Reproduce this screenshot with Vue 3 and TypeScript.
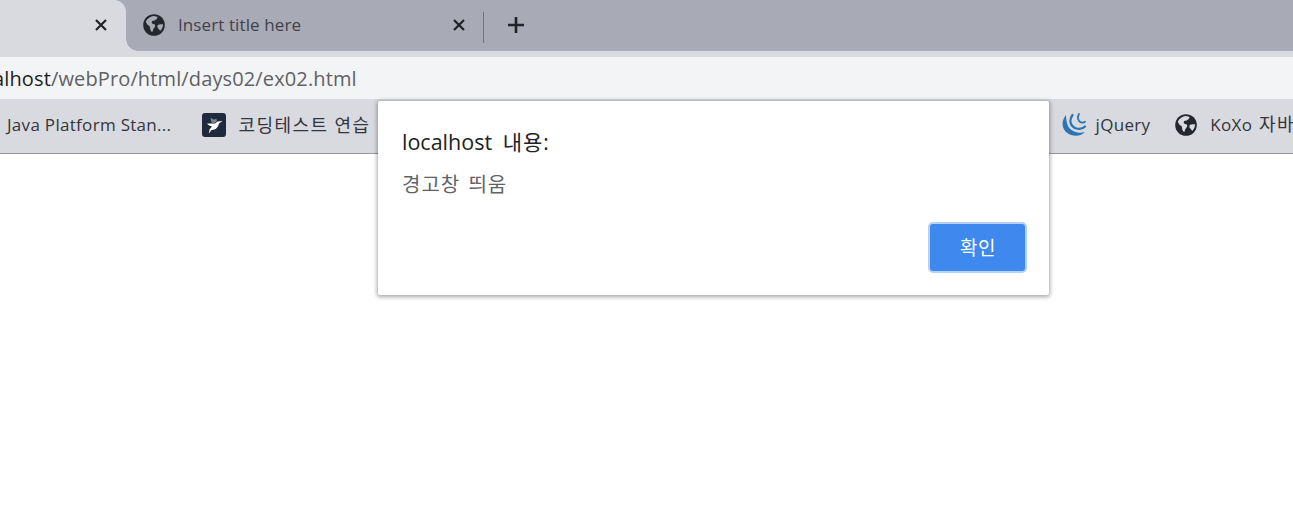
<script setup lang="ts">
const globe = "M10 1a9 9 0 1 0 0 18a9 9 0 0 0 0-18Z";
</script>

<template>
  <div class="page">
    <div class="tabstrip">
      <div class="tab active">
        <svg class="close" width="14" height="14" viewBox="0 0 14 14"><path d="M2 2L12 12M12 2L2 12" /></svg>
      </div>
      <div class="tab inactive">
        <svg class="globe" width="24" height="24" viewBox="0 0 20 20">
          <path :d="globe" fill="#24272e" />
          <path d="M3.200 7C4.600 4.400 7 2.800 9.800 2.500L12.800 3.200C13 4.600 12 5.800 10.400 6.200L8.600 6.600C7.800 7.400 8 8.800 9.200 9.200L10.800 9.600C11.400 11 10.600 12.200 9.600 13.200L8.600 15.800C7.400 15.600 7 14.400 6.800 13L6.400 11C5 10.400 3.800 9 3.200 7Z" fill="#a8abb5" />
          <path d="M13.400 9.800C14.600 9.200 16.200 9.200 17.500 9.400C17.600 11.400 16.800 13.400 15.400 14.800C14.400 14.400 14 13.400 13.200 12.600C12.600 11.600 12.800 10.400 13.400 9.800Z" fill="#a8abb5" />
        </svg>
        <span class="tab-title">Insert title here</span>
        <svg class="close" width="14" height="14" viewBox="0 0 14 14"><path d="M2 2L12 12M12 2L2 12" /></svg>
      </div>
      <div class="sep"></div>
      <svg class="plus" width="18" height="18" viewBox="0 0 18 18"><path d="M9 1V17M1 9H17" /></svg>
    </div>

    <div class="toolbar">
      <div class="omnibox"><span class="host">localhost</span><span class="path">/webPro/html/days02/ex02.html</span></div>
    </div>

    <div class="bookmarks">
      <span class="bm first">Java Platform Stan...</span>
      <span class="bm second">
        <svg width="24" height="24" viewBox="0 0 24 24">
          <rect width="24" height="24" rx="3" fill="#1f2a3f" />
          <path d="M5 10.500L13 10.500L15.500 8.500L20.500 8L17 10.500C16.500 13 15 15.500 12.500 16.500L9.500 17L7 20.500L7.500 16.500L10 13.500C8 13 6 12 5 10.500Z" fill="#fff" />
          <path d="M8.500 4.500L11.500 6.500L14.500 6L15 8L12.500 10L9.500 9.500Z" fill="#7d8694" />
        </svg>
        <span class="ko">코딩테스트 연습</span>
      </span>
      <span class="spacer"></span>
      <span class="bm third">
        <svg width="26" height="26" viewBox="0 0 26 26" fill="none" stroke="#2a76b4" stroke-linecap="round">
          <path d="M6 3C0 10 2 20 11 23C17 25 22 23 25 20C19 22 11 20 8 14C6.500 10 6 6 6 3Z" fill="#2a76b4" stroke="none" />
          <path d="M12.500 3C8.500 8.500 10.500 14.500 16.500 16.500C19.500 17.300 23 16.500 25 14.500" stroke-width="2.200" />
          <path d="M19 2C17 5.500 18 9 21 10.300C22.500 10.800 24 10.500 25 9.800" stroke-width="1.800" />
        </svg>
        <span>jQuery</span>
      </span>
      <span class="bm fourth">
        <svg width="24" height="24" viewBox="0 0 20 20">
          <path :d="globe" fill="#24272e" />
          <path d="M3.200 7C4.600 4.400 7 2.800 9.800 2.500L12.800 3.200C13 4.600 12 5.800 10.400 6.200L8.600 6.600C7.800 7.400 8 8.800 9.200 9.200L10.800 9.600C11.400 11 10.600 12.200 9.600 13.200L8.600 15.800C7.400 15.600 7 14.400 6.800 13L6.400 11C5 10.400 3.800 9 3.200 7Z" fill="#d9dadf" />
          <path d="M13.400 9.800C14.600 9.200 16.200 9.200 17.500 9.400C17.600 11.400 16.800 13.400 15.400 14.800C14.400 14.400 14 13.400 13.200 12.600C12.600 11.600 12.800 10.400 13.400 9.800Z" fill="#d9dadf" />
        </svg>
        <span>KoXo <span class="ko ko-tail">자바</span></span>
      </span>
    </div>

    <div class="dialog">
      <div class="dialog-title">localhost <span class="title-ko">내용:</span></div>
      <div class="dialog-msg">경고창 띄움</div>
      <div class="dialog-actions"><button class="ok">확인</button></div>
    </div>
  </div>
</template>

<style>
html, body { margin: 0; background: #fff; overflow: hidden; }
</style>

<style scoped>
.page {
  position: relative;
  width: 1293px;
  height: 529px;
  overflow: hidden;
  background: #fff;
  font-family: "Open Sans", "Noto Sans CJK KR", sans-serif;
}
.tabstrip {
  display: flex;
  align-items: center;
  height: 51px;
  background: #a8abb5;
}
.tab {
  display: flex;
  align-items: center;
  height: 51px;
  box-sizing: border-box;
  padding-bottom: 2px;
}
.active {
  width: 126px;
  justify-content: flex-end;
  padding-right: 18px;
  background: #d9dadf;
  border-radius: 0 12px 0 0;
  position: relative;
}
.active::after {
  content: "";
  position: absolute;
  left: 100%;
  bottom: 0;
  width: 12px;
  height: 12px;
  background: radial-gradient(circle at 100% 0, transparent 11.500px, #d9dadf 12px);
}
.inactive {
  width: 357px;
  padding-left: 16px;
  padding-right: 17px;
}
.close path { stroke: #202228; stroke-width: 2.200; fill: none; }
.tab-title {
  flex: 1;
  margin-left: 12px;
  font-size: 17px;
  letter-spacing: 0.1px;
  color: #43404a;
}
.sep { width: 1px; height: 31px; margin-top: 4px; background: #71737b; }
.plus { margin-left: 23px; margin-top: -2px; }
.plus path { stroke: #202228; stroke-width: 2.600; fill: none; }
.toolbar {
  height: 48px;
  box-sizing: border-box;
  padding-top: 6px;
  background: #d9dadf;
}
.omnibox {
  height: 42px;
  display: flex;
  align-items: center;
  background: #f3f4f6;
  font-size: 20px;
  letter-spacing: 0.13px;
  white-space: nowrap;
  overflow: hidden;
}
.host { color: #1d1d20; margin-left: -34px; }
.path { color: #5f6166; }
.bookmarks {
  height: 55px;
  box-sizing: border-box;
  padding-bottom: 2px;
  display: flex;
  align-items: center;
  background: #d9dadf;
  border-bottom: 1px solid #95969b;
  white-space: nowrap;
  overflow: hidden;
  font-size: 17px;
  letter-spacing: 0.3px;
  color: #33353b;
}
.bm { display: inline-flex; align-items: center; gap: 12px; flex: none; line-height: 22px; }
.bm > span { padding-bottom: 1px; }
.ko { font-size: 18px; letter-spacing: 1.450px; }
.ko-tail { margin-left: 2px; }
.first { margin-left: 7px; padding-bottom: 1px; }
.second { margin-left: 31px; }
.spacer { width: 689px; flex: none; }
.third { gap: 10px; }
.fourth { margin-left: 24px; gap: 12px; }
.dialog {
  position: absolute;
  left: 378px;
  top: 101px;
  width: 671px;
  height: 194px;
  box-sizing: border-box;
  padding: 26px 22px 22px 24px;
  background: #fff;
  border-radius: 2px;
  box-shadow: 0 1px 4px 1px rgba(0, 0, 0, 0.35);
  display: flex;
  flex-direction: column;
}
.dialog-title { font-size: 21.500px; line-height: 30px; color: #202124; }
.title-ko { font-size: 21px; letter-spacing: 1px; margin-left: 5px; }
.dialog-msg {
  font-size: 20px;
  letter-spacing: 1px;
  word-spacing: 2px;
  line-height: 26px;
  margin-top: 15px;
  color: #5f6368;
}
.dialog-actions { margin-top: auto; display: flex; justify-content: flex-end; }
.ok {
  box-sizing: content-box;
  width: 95px;
  height: 45px;
  border: 2px solid #b4d2f7;
  border-radius: 5px;
  background: #3f88ed;
  color: #fff;
  font-family: inherit;
  font-size: 19px;
  letter-spacing: 0.5px;
  padding: 0 0 2px 1px;
  width: 94px;
}
</style>
